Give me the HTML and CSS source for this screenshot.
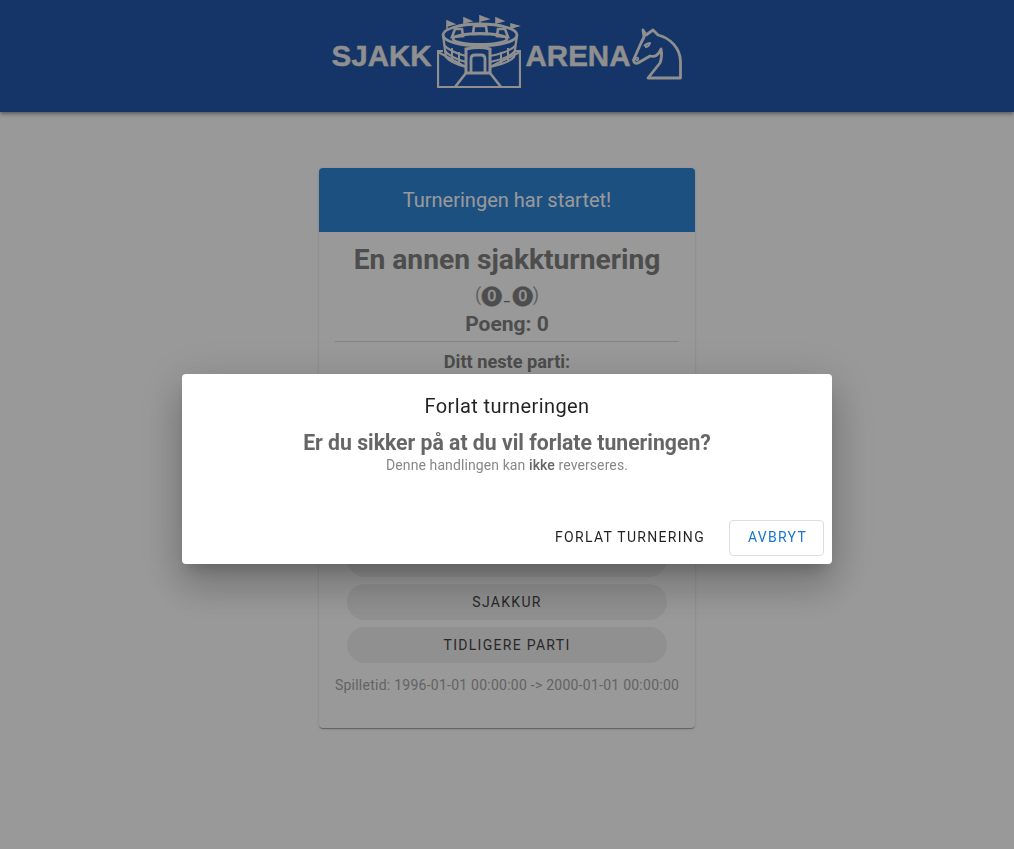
FILE: index.html
```html
<html>
  <head>
    <link rel="stylesheet" href="styles.css">
    <title>Sjakkarena</title>
  </head>
  <body>
    <header class="topbar">
      <div class="logo">
        <span class="logo-text">SJAKK</span>
        <svg class="stadium" width="84" height="74" viewBox="0 0 84 74" fill="none" stroke="#eee" stroke-width="2.2">
          <path d="M6 36 L1 36 V72 H83 V36 L78 36"/>
          <path d="M1 37 L29 52 M83 37 L53 52"/>
          <path d="M29 58 L18 72 M53 58 L64 72" stroke-width="2.6"/>
          <ellipse cx="43" cy="20" rx="37" ry="11" stroke-width="2.8"/>
          <ellipse cx="43" cy="24" rx="27" ry="5.5" stroke-width="2.8"/>
          <path d="M6 20 L9 42 Q14 48 29 52 M80 20 L77 42 Q72 48 53 52"/>
          <path d="M7 30 Q13 37 29 41 M79 30 Q73 37 53 41 M8 36 Q14 43 29 47 M78 36 Q72 43 53 47" stroke-width="2"/>
          <path d="M15 33 V46 M22 37 V50 M64 37 V50 M71 33 V46" stroke-width="2"/>
          <path d="M29 34 Q43 31 53 34 V58 H29 Z" stroke-width="3"/>
          <path d="M34 58 V44 Q34 40 38 40 H44 Q48 40 48 44 V58" stroke-width="2.8"/>
          <path d="M15 22 L18 14 H25 L26 21 Z M36 19 L37 11 H49 L50 19 Z M60 21 L61 14 H68 L71 22 Z" stroke-width="2.6"/>
        </svg>
        <span class="logo-text">ARENA</span>
        <svg class="knight" width="50" height="52" viewBox="0 0 50 52" fill="none" stroke="#eee" stroke-width="2.8" stroke-linejoin="round">
          <path d="M11 2 L14 7 L21 2 L26 7 C38 10 48.5 20 48.5 34 V50 H16 L28 35 C30 30 30 26 29 21 C26 28 23 29 18 28 L6 35 C3 36 1.5 34 1.5 32 L9 15 L12 9 Z"/>
          <path d="M12 18 Q15 15 18 15 Q17 19 13 19" stroke-width="2"/>
          <circle cx="5" cy="31" r="0.8"/>
        </svg>
        <svg class="flags" width="84" height="20" viewBox="0 0 84 20" fill="#eee" stroke="#eee" stroke-width="1.6">
          <path d="M10 14 V6 L17 9 L10 11 Z M27 10 V3 L34 6 L27 8 Z M43 8 V1 L51 4 L43 6 Z M59 10 V3 L66 6 L59 8 Z M74 15 V9 L81 11 L74 13 Z"/>
        </svg>
      </div>
    </header>

    <main class="content">
      <section class="card">
        <div class="card-head">Turneringen har startet!</div>
        <div class="card-body">
          <h1 class="tour-name">En annen sjakkturnering</h1>
          <div class="face">(<b>⓿</b><span class="mouth">_</span><b>⓿</b>)</div>
          <div class="points">Poeng: 0</div>
          <hr class="divider">
          <div class="next-game">Ditt neste parti:</div>
          <div class="next-box"></div>
          <button class="pill">Forlat turnering</button>
          <button class="pill">Sjakkur</button>
          <button class="pill">Tidligere parti</button>
          <p class="playtime">Spilletid: 1996-01-01 00:00:00 -&gt; 2000-01-01 00:00:00</p>
        </div>
      </section>
    </main>

    <div class="overlay">
      <div class="dialog">
        <h2 class="dialog-title">Forlat turneringen</h2>
        <div class="dialog-text">
          <div class="question">Er du sikker på at du vil forlate tuneringen?</div>
          <div class="warning">Denne handlingen kan <b>ikke</b> reverseres.</div>
        </div>
        <div class="dialog-actions">
          <button class="action">Forlat turnering</button>
          <button class="action cancel">Avbryt</button>
        </div>
      </div>
    </div>
  </body>
</html>
```

FILE: styles.css
```css
html, body {
  margin: 0;
  height: 100%;
}
body {
  font-family: Roboto, sans-serif;
  background-color: #fff;
  color: #000;
}

.topbar {
  height: 112px;
  background-color: #2359af;
  box-shadow: 0 2px 4px rgba(0, 0, 0, .4);
  display: flex;
  justify-content: center;
  align-items: flex-start;
}
.logo {
  position: relative;
  display: flex;
  align-items: flex-start;
  padding-top: 15px;
  opacity: .999;
}
.logo-text {
  font-family: "Liberation Sans", Arial, sans-serif;
  font-weight: bold;
  font-size: 29.5px;
  line-height: 36px;
  margin-top: 23px;
  color: #eee;
  -webkit-text-stroke: .4px #eee;
}
.stadium {
  margin: 0 5px 0 5px;
}
.knight {
  margin: 13px 0 0 2px;
}
.flags {
  position: absolute;
  left: 105px;
  top: 15px;
}

.content {
  display: flex;
  justify-content: center;
  padding-top: 56px;
  opacity: .999;
}
.card {
  width: 376px;
  height: 560px;
  border-radius: 4px;
  background-color: #fff;
  box-shadow: 0 2px 1px -1px rgba(0, 0, 0, .2), 0 1px 1px 0 rgba(0, 0, 0, .14), 0 1px 3px 0 rgba(0, 0, 0, .12);
  overflow: hidden;
}
.card-head {
  height: 64px;
  line-height: 64px;
  text-align: center;
  font-size: 20px;
  color: #fff;
  background-color: #2f86d8;
}
.card-body {
  padding: 0 16px;
  display: flex;
  flex-direction: column;
  align-items: center;
  color: #808080;
}
.tour-name {
  margin: 11px 0 0;
  font-size: 28.2px;
  line-height: 34px;
  font-weight: 700;
}
.face {
  margin-top: 4px;
  font-size: 18px;
  line-height: 26px;
  font-family: Roboto, "DejaVu Sans", sans-serif;
  color: #a0a0a0;
}
.mouth {
  font-size: 13px;
  font-weight: 700;
  padding: 0 2px;
  color: #808080;
}
.face b {
  font-family: "DejaVu Sans", sans-serif;
  font-size: 21px;
  font-weight: normal;
  color: #808080;
  -webkit-text-stroke: .6px #fff;
}
.points {
  font-size: 21px;
  line-height: 28px;
  font-weight: 700;
}
.divider {
  width: 100%;
  margin: 3px 0 0;
  border: 0;
  border-top: 1px solid #ddd;
}
.next-game {
  margin-top: 8px;
  font-size: 18.2px;
  line-height: 24px;
  font-weight: 700;
}
.next-box {
  height: 167px;
  flex-shrink: 0;
}
.pill {
  width: 320px;
  height: 36px;
  flex-shrink: 0;
  margin-bottom: 7px;
  border: 0;
  border-radius: 18px;
  background-color: #f0f0f0;
  font-family: Roboto, sans-serif;
  font-size: 14px;
  font-weight: 400;
  letter-spacing: 1.3px;
  text-transform: uppercase;
  color: #444;
}
.playtime {
  margin: 5px 0 0;
  font-size: 14px;
  line-height: 20px;
  letter-spacing: .25px;
  white-space: nowrap;
  color: #a6a6a6;
}

.overlay {
  position: fixed;
  top: 0;
  right: 0;
  bottom: 0;
  left: 0;
  background-color: rgba(0, 0, 0, .4);
  display: flex;
  justify-content: center;
  align-items: flex-start;
  padding-top: 374px;
  box-sizing: border-box;
}
.dialog {
  width: 650px;
  height: 190px;
  border-radius: 4px;
  background-color: #fff;
  box-shadow: 0 11px 15px -7px rgba(0, 0, 0, .2), 0 24px 38px 3px rgba(0, 0, 0, .14), 0 9px 46px 8px rgba(0, 0, 0, .12);
  display: flex;
  flex-direction: column;
  text-align: center;
  opacity: .999;
}
.dialog-title {
  margin: 0;
  padding-top: 16px;
  font-size: 20px;
  line-height: 32px;
  font-weight: 400;
  letter-spacing: .4px;
  color: rgba(0, 0, 0, .87);
}
.question {
  margin-top: 7px;
  font-size: 21.2px;
  line-height: 28px;
  font-weight: 700;
  color: #666;
}
.warning {
  font-size: 14px;
  line-height: 16px;
  letter-spacing: .1px;
  color: #888;
}
.warning b {
  font-weight: 500;
  color: #666;
}
.dialog-text {
  flex: 1;
}
.dialog-actions {
  display: flex;
  justify-content: flex-end;
  gap: 7px;
  padding: 8px;
}
.action {
  height: 36px;
  padding: 0 16px 2px;
  border: 1px solid transparent;
  border-radius: 4px;
  background-color: transparent;
  font-family: Roboto, sans-serif;
  font-size: 14px;
  font-weight: 400;
  letter-spacing: 1.3px;
  text-transform: uppercase;
  color: rgba(0, 0, 0, .87);
}
.action.cancel {
  min-width: 95px;
  padding: 0 15px 2px 17px;
  border-color: #ddd;
  color: #1976d2;
}
```
